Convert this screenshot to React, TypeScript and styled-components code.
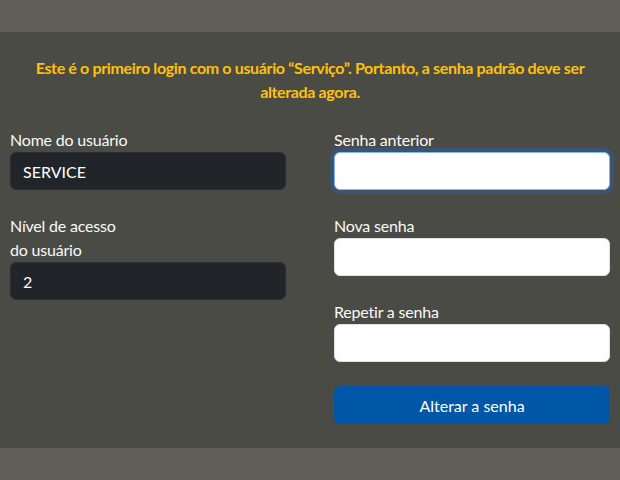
import styled, { createGlobalStyle } from "styled-components"

const GlobalStyle = createGlobalStyle`
    html, body {
        margin: 0;
        padding: 0;
        background: #5f5f57;
    }

    body {
        font-family: Lato, "Liberation Sans", sans-serif;
        font-size: 16px;
    }

    * {
        box-sizing: border-box;
    }
`

interface fieldProps {
    label: React.ReactNode
    value?: string
    dark?: boolean
    focused?: boolean
}

function Field({ label, value = "", dark = false, focused = false }: fieldProps) {
    return (
        <Group>
            <Label>{label}</Label>
            <Input $dark={dark} $focused={focused} defaultValue={value} readOnly={dark} />
        </Group>
    )
}

function App() {
    return (
        <>
            <GlobalStyle />
            <Page>
                <Panel>
                    <Warning>
                        Este é o primeiro login com o usuário “Serviço”. Portanto, a senha padrão deve ser
                        alterada agora.
                    </Warning>
                    <Columns>
                        <Column>
                            <Field label="Nome do usuário" value="SERVICE" dark />
                            <Field
                                label={
                                    <>
                                        Nível de acesso
                                        <br />
                                        do usuário
                                    </>
                                }
                                value="2"
                                dark
                            />
                        </Column>
                        <Column>
                            <Field label="Senha anterior" focused />
                            <Field label="Nova senha" />
                            <Field label="Repetir a senha" />
                            <Button>Alterar a senha</Button>
                        </Column>
                    </Columns>
                </Panel>
            </Page>
        </>
    )
}

export default App

const Page = styled.div`
    min-height: 480px;
    padding: 32px 0;
    background: #5f5f57;
`

const Panel = styled.div`
    background: #4b4b45;
    padding: 24px 10px;
`

const Warning = styled.p`
    margin: 0 0 24px;
    text-align: center;
    color: #ffc107;
    font-weight: 700;
    font-size: 16px;
    line-height: 24px;
    letter-spacing: -0.35px;
`

const Columns = styled.div`
    display: grid;
    grid-template-columns: 1fr 1fr;
    column-gap: 48px;
`

const Column = styled.div`
    display: flex;
    flex-direction: column;
    gap: 24px;
`

const Group = styled.div`
    display: flex;
    flex-direction: column;
`

const Label = styled.label`
    color: #f8f9fa;
    font-size: 16px;
    line-height: 24px;
    letter-spacing: -0.2px;
`

const Input = styled.input<{ $dark: boolean; $focused: boolean }>`
    height: 38px;
    width: 100%;
    padding: 6px 12px;
    font-family: inherit;
    font-size: 16px;
    border-radius: 6px;
    outline: none;
    color: ${({ $dark }) => ($dark ? "#ffffff" : "#212529")};
    background: ${({ $dark }) => ($dark ? "#212529" : "#ffffff")};
    border: 1px solid ${({ $dark, $focused }) => ($focused ? "#86b7fe" : $dark ? "#2b2f33" : "#dee2e6")};
    box-shadow: ${({ $focused }) => ($focused ? "0 0 0 4px rgba(13, 110, 253, 0.25)" : "none")};
`

const Button = styled.button`
    height: 38px;
    width: 100%;
    border: none;
    border-radius: 6px;
    background: #0057a8;
    color: #ffffff;
    font-family: inherit;
    font-size: 16px;
    cursor: pointer;
`
